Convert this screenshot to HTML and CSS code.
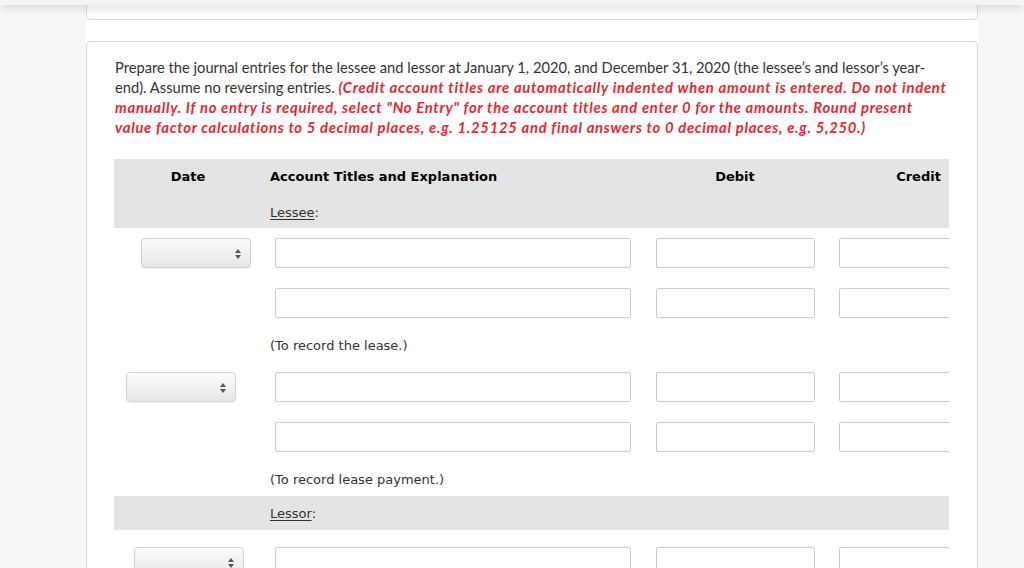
FILE: index.html
```html
<!DOCTYPE html>
<html lang="en">
<head>
    <meta charset="UTF-8">
    <meta name="viewport" content="width=device-width, initial-scale=1.0">
    <title>Journal Entries</title>
    <link rel="stylesheet" href="styles.css">
</head>
<body>

    <div class="topbar"></div>

    <div class="main">
        <div class="card card-prev"></div>

        <div class="card">
            <p class="question">
                Prepare the journal entries for the lessee and lessor at January 1, 2020, and December 31, 2020 (the lessee’s and lessor’s year-end). Assume no reversing entries.
                <span class="note">(Credit account titles are automatically indented when amount is entered. Do not indent manually. If no entry is required, select "No Entry" for the account titles and enter 0 for the amounts. Round present value factor calculations to 5 decimal places, e.g. 1.25125 and final answers to 0 decimal places, e.g. 5,250.)</span>
            </p>

            <div class="journal-wrap">
                <div class="journal">
                    <div class="row head">
                        <div class="cell center">Date</div>
                        <div class="cell">Account Titles and Explanation</div>
                        <div class="cell center">Debit</div>
                        <div class="cell center">Credit</div>
                    </div>
                    <div class="row section">
                        <div class="cell"></div>
                        <div class="cell"><u>Lessee</u>:</div>
                        <div class="cell"></div>
                        <div class="cell"></div>
                    </div>

                    <div class="row entry">
                        <div class="cell"><div class="select sel-a"><span class="arrows"></span></div></div>
                        <div class="cell"><input class="acct" type="text"></div>
                        <div class="cell center"><input class="amt" type="text"></div>
                        <div class="cell center"><input class="amt" type="text"></div>
                    </div>
                    <div class="row entry">
                        <div class="cell"></div>
                        <div class="cell"><input class="acct" type="text"></div>
                        <div class="cell center"><input class="amt" type="text"></div>
                        <div class="cell center"><input class="amt" type="text"></div>
                    </div>
                    <div class="row memo">
                        <div class="cell"></div>
                        <div class="cell">(To record the lease.)</div>
                        <div class="cell"></div>
                        <div class="cell"></div>
                    </div>

                    <div class="row entry">
                        <div class="cell"><div class="select sel-b"><span class="arrows"></span></div></div>
                        <div class="cell"><input class="acct" type="text"></div>
                        <div class="cell center"><input class="amt" type="text"></div>
                        <div class="cell center"><input class="amt" type="text"></div>
                    </div>
                    <div class="row entry">
                        <div class="cell"></div>
                        <div class="cell"><input class="acct" type="text"></div>
                        <div class="cell center"><input class="amt" type="text"></div>
                        <div class="cell center"><input class="amt" type="text"></div>
                    </div>
                    <div class="row memo">
                        <div class="cell"></div>
                        <div class="cell">(To record lease payment.)</div>
                        <div class="cell"></div>
                        <div class="cell"></div>
                    </div>

                    <div class="row section lessor">
                        <div class="cell"></div>
                        <div class="cell"><u>Lessor</u>:</div>
                        <div class="cell"></div>
                        <div class="cell"></div>
                    </div>

                    <div class="row entry first">
                        <div class="cell"><div class="select sel-c"><span class="arrows"></span></div></div>
                        <div class="cell"><input class="acct" type="text"></div>
                        <div class="cell center"><input class="amt" type="text"></div>
                        <div class="cell center"><input class="amt" type="text"></div>
                    </div>
                </div>
            </div>
        </div>
    </div>

</body>
</html>
```

FILE: styles.css
```css
* {
    box-sizing: border-box;
    margin: 0;
    padding: 0;
}

body {
    background: #f8f8f8;
    font-family: Lato, "Open Sans", sans-serif;
    color: #333;
    height: 568px;
    overflow: hidden;
}

.topbar {
    position: relative;
    z-index: 2;
    height: 5px;
    background: #f4f4f4;
    box-shadow: 0 3px 8px rgba(0, 0, 0, 0.18);
}

.main {
    margin-left: 86px;
    width: 892px;
    background: #fff;
    min-height: 600px;
}

.card {
    border: 1px solid #dcdcdc;
    border-radius: 4px;
    background: #fff;
    padding: 15px 28px 0 27px;
}

.card-prev {
    height: 15px;
    padding: 0;
    border-top: none;
    border-radius: 0 0 4px 4px;
    margin-bottom: 21px;
}

.question {
    font-size: 14.7px;
    line-height: 20px;
    color: #333;
    padding-left: 1px;
}

.note {
    color: #e8272f;
    font-style: italic;
    font-weight: bold;
    font-size: 14.8px;
    letter-spacing: 0.72px;
}

.journal-wrap {
    margin-top: 22px;
    width: 835px;
    overflow: hidden;
}

.journal {
    width: 896px;
    font-family: "DejaVu Sans", Verdana, sans-serif;
    font-size: 13px;
    color: #333;
}

.row {
    display: grid;
    grid-template-columns: 148px 381px 184px 183px;
    align-items: center;
}

.cell {
    padding-left: 8px;
}

.cell.center {
    padding-left: 0;
    text-align: center;
}

.head {
    background: #e4e4e4;
    height: 34px;
    font-weight: bold;
    color: #000;
}

.section {
    background: #e4e4e4;
    height: 35px;
    padding-top: 3px;
}

.section u {
    text-underline-offset: 2px;
}

.lessor {
    height: 34px;
    padding-top: 1px;
}

.entry {
    height: 50px;
}

.entry.first {
    height: 57px;
    padding-top: 7px;
}

.memo {
    height: 34px;
}

input {
    display: block;
    height: 30px;
    border: 1px solid #ccc;
    border-radius: 2px;
    background: #fff;
    outline: none;
}

.acct {
    width: 356px;
    margin-left: 5px;
}

.amt {
    width: 159px;
    margin: 0 auto;
}

.select {
    position: relative;
    width: 110px;
    height: 30px;
    border: 1px solid #d2d2d2;
    border-radius: 4px;
    background: linear-gradient(#fcfcfc, #e6e6e6);
    box-shadow: 0 1px 1px rgba(0, 0, 0, 0.06);
}

.sel-a {
    margin-left: 19px;
}

.sel-b {
    margin-left: 4px;
}

.sel-c {
    margin-left: 12px;
}

.arrows {
    position: absolute;
    right: 9px;
    top: 10px;
    width: 6px;
    height: 10px;
}

.arrows::before,
.arrows::after {
    content: "";
    position: absolute;
    left: 0;
    border-left: 3px solid transparent;
    border-right: 3px solid transparent;
}

.arrows::before {
    top: 0;
    border-bottom: 4px solid #555;
}

.arrows::after {
    bottom: 0;
    border-top: 4px solid #555;
}
```
